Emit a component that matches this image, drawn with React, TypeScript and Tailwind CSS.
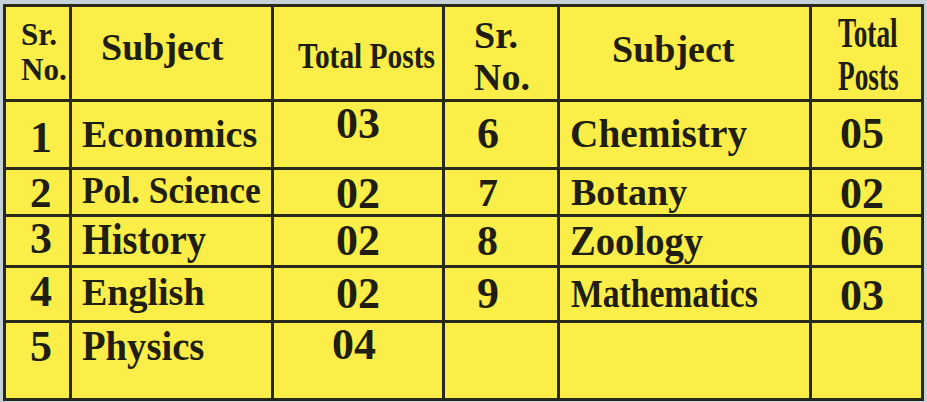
type Cell = { t: string; c: string; s?: string };

const yellow = "bg-[#fcee48]";

const body: Cell[][] = [
  [
    { t: "1", c: "pt-[14px] pl-[24px] text-[44px]" },
    { t: "Economics", c: "pt-[13px] pl-[10px] text-[38px]" },
    { t: "03", c: "pt-0 text-center text-[44px]" },
    { t: "6", c: "pt-[10px] pl-[32px] text-[44px]" },
    { t: "Chemistry", c: "pt-[11px] pl-[10px] text-[41px]", s: "scale-x-[0.96]" },
    { t: "05", c: "pt-[10px] pl-[28px] text-[44px]" },
  ],
  [
    { t: "2", c: "pt-[1px] pl-[24px] text-[43px]" },
    { t: "Pol. Science", c: "pt-[1px] pl-[10px] text-[38px]", s: "scale-x-[0.93]" },
    { t: "02", c: "pt-[2px] text-center text-[44px]" },
    { t: "7", c: "pt-[3px] pl-[33px] text-[40px]" },
    { t: "Botany", c: "pt-[3px] pl-[11px] text-[38px]" },
    { t: "02", c: "pt-[2px] pl-[28px] text-[44px]" },
  ],
  [
    { t: "3", c: "pt-0 pl-[24px] text-[44px]" },
    { t: "History", c: "pt-0 pl-[10px] text-[45px]", s: "scale-x-[0.855]" },
    { t: "02", c: "pt-[2px] text-center text-[44px]" },
    { t: "8", c: "pt-[3px] pl-[32px] text-[42px]" },
    { t: "Zoology", c: "pt-[3px] pl-[10px] text-[42px]", s: "scale-x-[0.92]" },
    { t: "06", c: "pt-[2px] pl-[28px] text-[44px]" },
  ],
  [
    { t: "4", c: "pt-[2px] pl-[24px] text-[44px]" },
    { t: "English", c: "pt-[5px] pl-[10px] text-[38px]" },
    { t: "02", c: "pt-[4px] text-center text-[44px]" },
    { t: "9", c: "pt-[4px] pl-[32px] text-[44px]" },
    { t: "Mathematics", c: "pt-[5px] pl-[11px] text-[41px]", s: "scale-x-[0.82]" },
    { t: "03", c: "pt-[6px] pl-[28px] text-[44px]" },
  ],
  [
    { t: "5", c: "pt-[2px] pl-[24px] text-[44px]" },
    { t: "Physics", c: "pt-[2px] pl-[10px] text-[42px]", s: "scale-x-[0.92]" },
    { t: "04", c: "pt-0 pr-[8px] text-center text-[44px]" },
    { t: "", c: "" },
    { t: "", c: "" },
    { t: "", c: "" },
  ],
];

export default function App() {
  return (
    <div className="w-[927px] h-[402px] bg-[#c4d1d7] pt-[4px] pl-[3px] overflow-hidden">
      <div className="grid w-[921px] grid-cols-[63px_199px_168px_112px_249px_109px] grid-rows-[92px_65px_44px_48px_52px_75px] gap-[3px] bg-[#29291a] p-[3px] font-['Liberation_Serif','Times_New_Roman',serif] font-bold text-[#201e10]">
        {/* header */}
        <div className={`${yellow} pt-[10px] pl-[15px]`}>
          <div className="text-[31px] leading-[35px]">
            Sr.
            <br />
            No.
          </div>
        </div>
        <div className={`${yellow} pt-[21px] pl-[29px] text-[38px] leading-none`}>Subject</div>
        <div className={`${yellow} pt-[32px] pl-[24px] whitespace-nowrap`}>
          <span className="inline-block origin-left scale-x-[0.84] text-[35px] leading-none">Total Posts</span>
        </div>
        <div className={`${yellow} pt-[7px] pl-[29px]`}>
          <div className="text-[38px] leading-[42px]">
            Sr.
            <br />
            No.
          </div>
        </div>
        <div className={`${yellow} pt-[23px] pl-[52px] text-[38px] leading-none`}>Subject</div>
        <div className={`${yellow} pt-[5px] pl-[26px]`}>
          <div className="origin-left scale-x-[0.65] text-[42px] leading-[43px] whitespace-nowrap">
            Total
            <br />
            Posts
          </div>
        </div>

        {body.map((row, i) =>
          row.map((cell, j) => (
            <div key={`${i}-${j}`} className={`${yellow} leading-none whitespace-nowrap ${cell.c}`}>
              {cell.t && <span className={`inline-block origin-left ${cell.s ?? ""}`}>{cell.t}</span>}
            </div>
          ))
        )}
      </div>
    </div>
  );
}
